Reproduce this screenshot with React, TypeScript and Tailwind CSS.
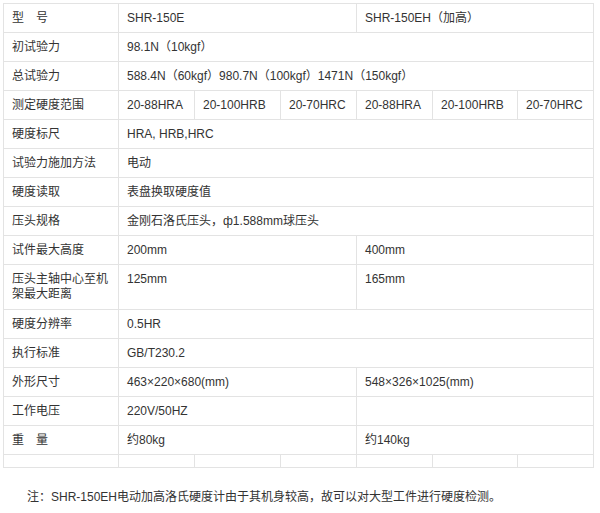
const F = { fontFamily: '"Liberation Sans", "Noto Sans CJK SC", sans-serif' }

const td = "border border-[#e3e3e3] px-[8px] align-top pt-[7px] text-[12px] leading-[15px] text-[#333]"

type Row = [string, ...([string, number])[]]

const rows: Row[] = [
  ["型\u3000号", ["SHR-150E", 3], ["SHR-150EH（加高）", 3]],
  ["初试验力", ["98.1N（10kgf）", 6]],
  ["总试验力", ["588.4N（60kgf）980.7N（100kgf）1471N（150kgf）", 6]],
  ["测定硬度范围", ["20-88HRA", 1], ["20-100HRB", 1], ["20-70HRC", 1], ["20-88HRA", 1], ["20-100HRB", 1], ["20-70HRC", 1]],
  ["硬度标尺", ["HRA, HRB,HRC", 6]],
  ["试验力施加方法", ["电动", 6]],
  ["硬度读取", ["表盘换取硬度值", 6]],
  ["压头规格", ["金刚石洛氏压头，ф1.588mm球压头", 6]],
  ["试件最大高度", ["200mm", 3], ["400mm", 3]],
  ["压头主轴中心至机架最大距离", ["125mm", 3], ["165mm", 3]],
  ["硬度分辨率", ["0.5HR", 6]],
  ["执行标准", ["GB/T230.2", 6]],
  ["外形尺寸", ["463×220×680(mm)", 3], ["548×326×1025(mm)", 3]],
  ["工作电压", ["220V/50HZ", 3], ["", 3]],
  ["重\u3000量", ["约80kg", 3], ["约140kg", 3]],
]

export default function App() {
  return (
    <div className="w-[600px] h-[513px] bg-white pt-[3px] px-[3px]" style={F}>
      <table className="w-[590px] table-fixed border-collapse">
        <colgroup>
          <col className="w-[115px]" />
          <col className="w-[76px]" />
          <col className="w-[86px]" />
          <col className="w-[76px]" />
          <col className="w-[76px]" />
          <col className="w-[85px]" />
          <col className="w-[76px]" />
        </colgroup>
        <tbody>
          {rows.map((r, i) => (
            <tr key={i} className={i === 9 ? "h-[45px]" : "h-[29px]"}>
              <td className={td + " pr-0"}>{r[0]}</td>
              {(r.slice(1) as [string, number][]).map(([t, s], j) => (
                <td key={j} colSpan={s} className={td}>{t}</td>
              ))}
            </tr>
          ))}
          <tr className="h-[13px]">
            {[0, 1, 2, 3, 4, 5, 6].map((k) => (
              <td key={k} className="border border-[#e3e3e3]" />
            ))}
          </tr>
        </tbody>
      </table>
      <p className="mt-[20px] pl-[24px] text-[12px] text-[#333]">
        注：SHR-150EH电动加高洛氏硬度计由于其机身较高，故可以对大型工件进行硬度检测。
      </p>
    </div>
  )
}
